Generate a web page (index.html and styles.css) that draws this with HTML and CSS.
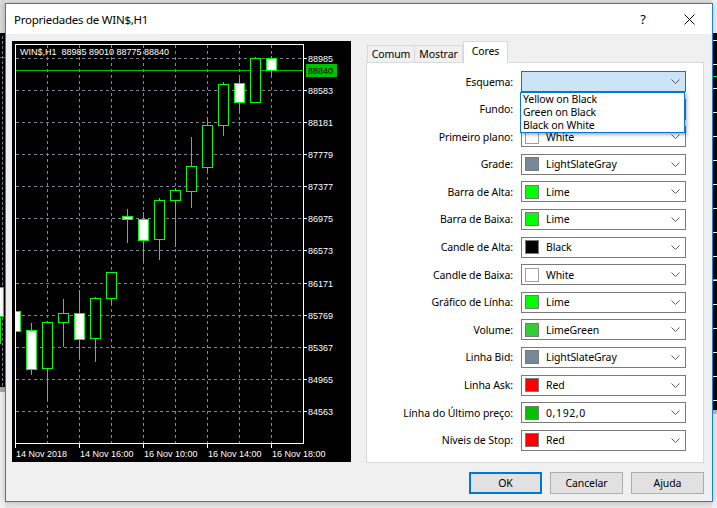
FILE: index.html
```html
<!DOCTYPE html>
<html lang="pt">
<head>
<meta charset="utf-8">
<title>Propriedades de WIN$,H1</title>
<link rel="stylesheet" href="styles.css">
</head>
<body>
<div class="bg-left">
  <div class="bgl-dash"></div>
  <div class="bgl-green"></div>
  <div class="bgl-candle"></div>
  <div class="bgl-wick"></div>
</div>
<div class="bg-right">
  <div class="bgr-ticks"></div>
  <div class="bgr-green g1"></div>
  <div class="bgr-green g2"></div>
</div>

<div class="dialog">
  <div class="titlebar">
    <span class="title">Propriedades de WIN$,H1</span>
    <span class="cap-btn help">?</span>
    <span class="cap-btn close">
      <svg width="11" height="11" viewBox="0 0 11 11"><path d="M0.5 0.5 L10.5 10.5 M10.5 0.5 L0.5 10.5" stroke="#000" stroke-width="1" fill="none"/></svg>
    </span>
  </div>
  <div class="body">
    <div class="chart">
      <svg width="339" height="421" viewBox="12 41 339 421" font-family="Liberation Sans, Arial, sans-serif" font-size="9">
        <rect x="12" y="41" width="339" height="421" fill="#000"/>
        <g stroke="#778899" stroke-dasharray="3 3" stroke-width="1">
          <path d="M16 58.5H303 M16 90.5H303 M16 122.5H303 M16 154.5H303 M16 186.5H303 M16 218.5H303 M16 250.5H303 M16 283.5H303 M16 315.5H303 M16 347.5H303 M16 379.5H303 M16 411.5H303"/>
          <path d="M47.5 45V443 M79.5 45V443 M111.5 45V443 M143.5 45V443 M175.5 45V443 M207.5 45V443 M239.5 45V443 M271.5 45V443"/>
        </g>
        <line x1="16" y1="70.5" x2="303" y2="70.5" stroke="#00c000"/>
        <g stroke="#00ff00" stroke-width="1">
          <line x1="31.5" y1="323" x2="31.5" y2="375"/>
          <line x1="47.5" y1="321" x2="47.5" y2="401"/>
          <line x1="63.5" y1="299" x2="63.5" y2="347"/>
          <line x1="79.5" y1="290" x2="79.5" y2="358"/>
          <line x1="95.5" y1="297" x2="95.5" y2="362"/>
          <line x1="111.5" y1="272" x2="111.5" y2="304"/>
          <line x1="127.5" y1="209" x2="127.5" y2="243"/>
          <line x1="143.5" y1="212" x2="143.5" y2="262"/>
          <line x1="159.5" y1="198" x2="159.5" y2="260"/>
          <line x1="175.5" y1="188" x2="175.5" y2="247"/>
          <line x1="191.5" y1="137" x2="191.5" y2="208"/>
          <line x1="207.5" y1="117" x2="207.5" y2="171"/>
          <line x1="223.5" y1="82" x2="223.5" y2="136"/>
          <line x1="239.5" y1="78" x2="239.5" y2="112"/>
          <line x1="255.5" y1="57" x2="255.5" y2="103"/>
          <line x1="271.5" y1="56" x2="271.5" y2="76"/>
          <rect x="15.5" y="311.5" width="5" height="20" fill="#fff"/>
          <rect x="26.5" y="330.5" width="10" height="39" fill="#fff"/>
          <rect x="42.5" y="322.5" width="10" height="46" fill="#000"/>
          <rect x="58.5" y="313.5" width="10" height="9" fill="#000"/>
          <rect x="74.5" y="313.5" width="10" height="26" fill="#fff"/>
          <rect x="90.5" y="298.5" width="10" height="40" fill="#000"/>
          <rect x="106.5" y="272.5" width="10" height="26" fill="#000"/>
          <rect x="122.5" y="216.5" width="10" height="3" fill="#fff"/>
          <rect x="138.5" y="219.5" width="10" height="21" fill="#fff"/>
          <rect x="154.5" y="200.5" width="10" height="39" fill="#000"/>
          <rect x="170.5" y="190.5" width="10" height="10" fill="#000"/>
          <rect x="186.5" y="166.5" width="10" height="25" fill="#000"/>
          <rect x="202.5" y="125.5" width="10" height="42" fill="#000"/>
          <rect x="218.5" y="84.5" width="10" height="41" fill="#000"/>
          <rect x="234.5" y="83.5" width="10" height="19" fill="#fff"/>
          <rect x="250.5" y="58.5" width="10" height="44" fill="#000"/>
          <rect x="266.5" y="58.5" width="10" height="12" fill="#fff"/>
        </g>
        <rect x="15.5" y="44.5" width="288" height="399" fill="none" stroke="#fff"/>
        <g stroke="#fff">
          <path d="M303 58.5H307 M303 90.5H307 M303 122.5H307 M303 154.5H307 M303 186.5H307 M303 218.5H307 M303 250.5H307 M303 283.5H307 M303 315.5H307 M303 347.5H307 M303 379.5H307 M303 411.5H307"/>
          <path d="M15.5 443V448 M79.5 443V448 M143.5 443V448 M207.5 443V448 M271.5 443V448"/>
        </g>
        <g fill="#fff" class="chart-text">
          <text x="20" y="55">WIN$,H1  88985 89010 88775 88840</text>
          <text x="308" y="62">88985</text>
          <text x="308" y="94">88583</text>
          <text x="308" y="126">88181</text>
          <text x="308" y="158">87779</text>
          <text x="308" y="190">87377</text>
          <text x="308" y="222">86975</text>
          <text x="308" y="254">86573</text>
          <text x="308" y="287">86171</text>
          <text x="308" y="319">85769</text>
          <text x="308" y="351">85367</text>
          <text x="308" y="383">84965</text>
          <text x="308" y="415">84563</text>
          <text x="16" y="457">14 Nov 2018</text>
          <text x="80" y="457">14 Nov 16:00</text>
          <text x="144" y="457">16 Nov 10:00</text>
          <text x="208" y="457">16 Nov 14:00</text>
          <text x="272" y="457">16 Nov 18:00</text>
        </g>
        <rect x="306" y="64" width="31" height="13" fill="#00c000"/>
        <text x="308" y="74" fill="#000">88840</text>
      </svg>
    </div>

    <div class="props">
      <div class="tabs">
        <div class="tab">Comum</div>
        <div class="tab">Mostrar</div>
        <div class="tab active">Cores</div>
      </div>
      <div class="panel">
        <div class="form">
          <label class="lbl">Esquema:</label>
          <div class="select focus"><span class="val"></span><svg class="chev" width="9" height="5" viewBox="0 0 9 5"><path d="M0.5 0.5 L4.5 4.5 L8.5 0.5" fill="none" stroke="#5a5a5a"/></svg></div>

          <label class="lbl">Fundo:</label>
          <div class="select"><span class="val"></span></div>

          <label class="lbl">Primeiro plano:</label>
          <div class="select"><span class="sw sw-white"></span><span class="val">White</span><svg class="chev" width="9" height="5" viewBox="0 0 9 5"><path d="M0.5 0.5 L4.5 4.5 L8.5 0.5" fill="none" stroke="#5a5a5a"/></svg></div>

          <label class="lbl">Grade:</label>
          <div class="select"><span class="sw sw-slate"></span><span class="val">LightSlateGray</span><svg class="chev" width="9" height="5" viewBox="0 0 9 5"><path d="M0.5 0.5 L4.5 4.5 L8.5 0.5" fill="none" stroke="#5a5a5a"/></svg></div>

          <label class="lbl">Barra de Alta:</label>
          <div class="select"><span class="sw sw-lime"></span><span class="val">Lime</span><svg class="chev" width="9" height="5" viewBox="0 0 9 5"><path d="M0.5 0.5 L4.5 4.5 L8.5 0.5" fill="none" stroke="#5a5a5a"/></svg></div>

          <label class="lbl">Barra de Baixa:</label>
          <div class="select"><span class="sw sw-lime"></span><span class="val">Lime</span><svg class="chev" width="9" height="5" viewBox="0 0 9 5"><path d="M0.5 0.5 L4.5 4.5 L8.5 0.5" fill="none" stroke="#5a5a5a"/></svg></div>

          <label class="lbl">Candle de Alta:</label>
          <div class="select"><span class="sw sw-black"></span><span class="val">Black</span><svg class="chev" width="9" height="5" viewBox="0 0 9 5"><path d="M0.5 0.5 L4.5 4.5 L8.5 0.5" fill="none" stroke="#5a5a5a"/></svg></div>

          <label class="lbl">Candle de Baixa:</label>
          <div class="select"><span class="sw sw-white"></span><span class="val">White</span><svg class="chev" width="9" height="5" viewBox="0 0 9 5"><path d="M0.5 0.5 L4.5 4.5 L8.5 0.5" fill="none" stroke="#5a5a5a"/></svg></div>

          <label class="lbl">Gráfico de Línha:</label>
          <div class="select"><span class="sw sw-lime"></span><span class="val">Lime</span><svg class="chev" width="9" height="5" viewBox="0 0 9 5"><path d="M0.5 0.5 L4.5 4.5 L8.5 0.5" fill="none" stroke="#5a5a5a"/></svg></div>

          <label class="lbl">Volume:</label>
          <div class="select"><span class="sw sw-limegreen"></span><span class="val">LimeGreen</span><svg class="chev" width="9" height="5" viewBox="0 0 9 5"><path d="M0.5 0.5 L4.5 4.5 L8.5 0.5" fill="none" stroke="#5a5a5a"/></svg></div>

          <label class="lbl">Linha Bid:</label>
          <div class="select"><span class="sw sw-slate"></span><span class="val">LightSlateGray</span><svg class="chev" width="9" height="5" viewBox="0 0 9 5"><path d="M0.5 0.5 L4.5 4.5 L8.5 0.5" fill="none" stroke="#5a5a5a"/></svg></div>

          <label class="lbl">Linha Ask:</label>
          <div class="select"><span class="sw sw-red"></span><span class="val">Red</span><svg class="chev" width="9" height="5" viewBox="0 0 9 5"><path d="M0.5 0.5 L4.5 4.5 L8.5 0.5" fill="none" stroke="#5a5a5a"/></svg></div>

          <label class="lbl">Línha do Último preço:</label>
          <div class="select"><span class="sw sw-green192"></span><span class="val rgb">0,192,0</span><svg class="chev" width="9" height="5" viewBox="0 0 9 5"><path d="M0.5 0.5 L4.5 4.5 L8.5 0.5" fill="none" stroke="#5a5a5a"/></svg></div>

          <label class="lbl">Níveis de Stop:</label>
          <div class="select"><span class="sw sw-red"></span><span class="val">Red</span><svg class="chev" width="9" height="5" viewBox="0 0 9 5"><path d="M0.5 0.5 L4.5 4.5 L8.5 0.5" fill="none" stroke="#5a5a5a"/></svg></div>
        </div>

        <ul class="dropdown">
          <li>Yellow on Black</li>
          <li>Green on Black</li>
          <li>Black on White</li>
        </ul>
      </div>
      <div class="buttons">
        <button class="btn default">OK</button>
        <button class="btn">Cancelar</button>
        <button class="btn">Ajuda</button>
      </div>
    </div>
  </div>
</div>
</body>
</html>
```
FILE: styles.css
```css
* { box-sizing: border-box; margin: 0; padding: 0; }
html, body { width: 717px; height: 508px; overflow: hidden; }
body {
  position: relative;
  background: #e6e6e6;
  font-family: "Noto Sans", "Liberation Sans", sans-serif;
  font-size: 10.5px;
  letter-spacing: -0.1px;
  color: #000;
}

/* windows behind the dialog */
.bg-left {
  position: absolute; left: 0; top: 0; width: 5px; height: 508px;
  background: linear-gradient(to bottom, #dadada 0 33px, #000 33px 387px, #a9a9a9 387px 392px, #f0f0f0 392px);
}
.bgl-dash { position: absolute; left: 2px; top: 36px; height: 350px; border-left: 1px dashed #7f8c99; }
.bgl-green { position: absolute; left: 0; top: 57px; width: 5px; height: 1px; background: #00c000; }
.bgl-candle { position: absolute; left: 0; top: 287px; width: 4px; height: 30px; background: #fff; border: 1px solid #00ff00; border-left: 0; }
.bgl-wick { position: absolute; left: 0; top: 318px; width: 1px; height: 26px; background: #00ff00; }
.bg-right {
  position: absolute; right: 0; top: 0; width: 5px; height: 508px;
  background: linear-gradient(to bottom, #f2f2f2 0 33px, #000 33px 410px, #bdbdbd 410px 414px, #f0f0f0 414px);
}
.bgr-ticks {
  position: absolute; left: 1px; top: 40px; width: 4px; height: 365px;
  background: repeating-linear-gradient(to bottom, #fff 0 1px, transparent 1px 24px);
}
.bgr-green { position: absolute; left: 0; width: 5px; height: 1px; background: #00ff00; }
.g1 { top: 76px; }
.g2 { top: 279px; }

/* dialog */
.dialog {
  position: absolute; left: 5px; top: 3px; width: 708px; height: 499px;
  border: 1px solid #1883d7;
  background: #f0f0f0;
  display: flex; flex-direction: column;
  box-shadow: 0 0 6px rgba(0, 0, 0, 0.25);
}
.titlebar {
  height: 30px; flex: none;
  background: #fff;
  display: flex; align-items: center;
  padding-left: 8px;
  font-size: 11.5px;
  letter-spacing: -0.25px;
}
.title { flex: 1; }
.cap-btn { width: 46px; height: 30px; display: flex; align-items: center; justify-content: center; }
.help { font-size: 13px; letter-spacing: 0; }

.body { display: flex; gap: 15px; padding: 7px 0 0 6px; }
.chart { width: 339px; height: 421px; flex: none; background: #000; }
.chart svg { display: block; letter-spacing: 0; }
.chart-text text { white-space: pre; }

.props { width: 338px; display: flex; flex-direction: column; }
.tabs { height: 21px; display: flex; align-items: flex-end; padding-left: 1px; }
.tab {
  height: 17px; margin-top: 4px;
  border: 1px solid #d9d9d9; border-bottom: 0;
  background: #f0f0f0;
  display: flex; align-items: center; justify-content: center;
  padding-bottom: 1px;
}
.tab:nth-child(1) { width: 48px; }
.tab:nth-child(2) { width: 49px; margin-left: -1px; }
.tab.active {
  width: 45px; height: 22px; margin-bottom: -1px; margin-left: 0;
  background: #fff; position: relative; z-index: 1;
  padding-bottom: 4px;
}

.panel {
  position: relative;
  height: 401px;
  background: #fff;
  border: 1px solid #d9d9d9;
  padding: 8px 17px 0 0;
}
.form {
  display: grid;
  grid-template-columns: 1fr 165px;
  grid-auto-rows: 21px;
  column-gap: 8px;
  row-gap: 6.6px;
}
.lbl { display: flex; align-items: center; justify-content: flex-end; white-space: nowrap; }
.select {
  display: flex; align-items: center;
  border: 1px solid #7a7a7a;
  background: #fff;
  padding: 0 5px 0 3px;
}
.select.focus { background: #cce4f7; border-color: #0078d7; }
.sw { width: 14px; height: 14px; border: 1px solid #7a7a7a; flex: none; margin-right: 7px; }
.sw-black { background: #000; }
.sw-white { background: #fff; border-color: #a0a0a0; }
.sw-slate { background: #778899; }
.sw-lime { background: #00ff00; }
.sw-limegreen { background: #32cd32; }
.sw-red { background: #ff0000; }
.sw-green192 { background: #00c000; }
.val { flex: 1; white-space: nowrap; }
.val.rgb { letter-spacing: 0.6px; }
.chev { flex: none; }

.dropdown {
  position: absolute; left: 153px; top: 29px;
  width: 165px; height: 41px;
  list-style: none;
  background: #fff;
  border: 1px solid #0078d7;
  box-shadow: 2px 2px 3px rgba(0, 0, 0, 0.3);
  padding: 0 2px;
}
.dropdown li { height: 13px; line-height: 13px; white-space: nowrap; }

.buttons { display: flex; justify-content: flex-end; gap: 8px; margin-top: 9px; }
.btn {
  width: 73px; height: 22px;
  background: #e1e1e1;
  border: 1px solid #adadad;
  font-family: "Noto Sans", "Liberation Sans", sans-serif;
  font-size: 10.5px; letter-spacing: -0.1px; color: #000;
}
.btn.default { border: 2px solid #0078d7; }
```
